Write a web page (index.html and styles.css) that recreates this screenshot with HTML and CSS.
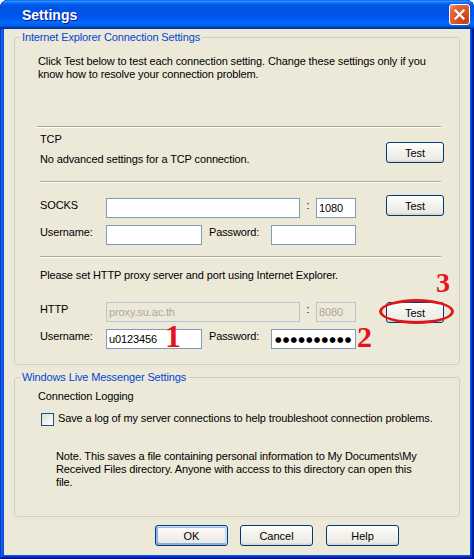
FILE: index.html
```html
<!DOCTYPE html>
<html>
<head>
<meta charset="utf-8">
<title>Settings</title>
<link rel="stylesheet" href="styles.css">
</head>
<body>
<div class="window">
  <div class="titlebar">
    <span class="title">Settings</span>
    <span class="close" aria-label="Close">
      <svg width="21" height="21" viewBox="0 0 21 21"><path d="M6.5 6.5L14.5 14.5M14.5 6.5L6.5 14.5" stroke="#fff" stroke-width="2.2" stroke-linecap="square"/></svg>
    </span>
  </div>
  <div class="client">
    <fieldset class="group g1">
      <legend>Internet Explorer Connection Settings</legend>
      <p class="intro">Click Test below to test each connection setting. Change these settings only if you<br>know how to resolve your connection problem.</p>
      <div class="sep sep1"></div>
      <div class="tcp">
        <div class="tcp-text">
          <div>TCP</div>
          <div class="tcp-desc">No advanced settings for a TCP connection.</div>
        </div>
        <button class="btn test tcp-test">Test</button>
      </div>
      <div class="sep sep2"></div>
      <div class="proxy socks">
        <div class="row">
          <span class="name">SOCKS</span>
          <input class="field server" value="">
          <span class="colon">:</span>
          <input class="field port" value="1080">
          <button class="btn test socks-test">Test</button>
        </div>
        <div class="row row2">
          <span class="name">Username:</span>
          <input class="field user" value="">
          <span class="pw">Password:</span>
          <input class="field pass" value="">
        </div>
      </div>
      <div class="sep sep3"></div>
      <p class="http-note">Please set HTTP proxy server and port using Internet Explorer.</p>
      <div class="proxy http">
        <div class="row">
          <span class="name">HTTP</span>
          <input class="field server" value="proxy.su.ac.th" disabled>
          <span class="colon">:</span>
          <input class="field port" value="8080" disabled>
          <button class="btn test http-test">Test</button>
          <span class="mark mark3">3</span>
          <span class="ring"></span>
        </div>
        <div class="row row2">
          <span class="name">Username:</span>
          <input class="field user" value="u0123456">
          <span class="mark mark1">1</span>
          <span class="pw">Password:</span>
          <span class="field pass dots">●●●●●●●●●●</span>
          <span class="mark mark2">2</span>
        </div>
      </div>
    </fieldset>

    <fieldset class="group g2">
      <legend>Windows Live Messenger Settings</legend>
      <p class="log-title">Connection Logging</p>
      <label class="check-row">
        <span class="checkbox"></span>
        <span>Save a log of my server connections to help troubleshoot connection problems.</span>
      </label>
      <p class="log-note">Note. This saves a file containing personal information to My Documents\My<br>Received Files directory. Anyone with access to this directory can open this<br>file.</p>
    </fieldset>

    <div class="actions">
      <button class="btn action default">OK</button>
      <button class="btn action">Cancel</button>
      <button class="btn action">Help</button>
    </div>
  </div>
</div>
</body>
</html>
```
FILE: styles.css
```css
* { box-sizing: border-box; }

html, body {
  margin: 0;
  padding: 0;
  background: #ffffff;
}

body {
  width: 474px;
  height: 559px;
  overflow: hidden;
  font-family: "Liberation Sans", Arial, sans-serif;
  font-size: 11px;
  line-height: 13px;
  letter-spacing: -0.13px;
  color: #000;
}

.window {
  width: 474px;
  height: 559px;
  display: flex;
  flex-direction: column;
  background: #0855dd;
  border-radius: 8px 8px 0 0;
  overflow: hidden;
  box-shadow: inset -1px -1px #00138c, inset 1px 1px #0831d9, inset -2px -2px #001ea0, inset 2px 2px #166aee, inset -3px -3px #003bda, inset 3px 3px #0855dd;
}

.titlebar {
  flex: none;
  height: 29px;
  display: flex;
  align-items: center;
  justify-content: space-between;
  padding: 0 4px 0 22px;
  background: linear-gradient(to bottom, #0058ee 0%, #3593ff 4%, #288eff 6%, #127dff 8%, #036ffc 10%, #0262ee 14%, #0057e5 20%, #0054e3 24%, #0055eb 56%, #005bf5 66%, #026afe 76%, #0062ef 86%, #0052d6 92%, #0040ab 94%, #003092 100%);
  border-radius: 8px 8px 0 0;
}

.title {
  color: #fff;
  font-weight: bold;
  font-size: 14px;
  line-height: 16px;
  text-shadow: 1px 1px #0f1089;
  letter-spacing: 0;
}

.close {
  width: 21px;
  height: 21px;
  display: block;
  border: 1px solid #fff;
  border-radius: 3px;
  background: radial-gradient(circle at 85% 85%, #c13d14 0%, #d8522a 45%, #e1693f 75%, #f0a587 100%);
}

.close svg { display: block; margin: -1px; }

.client {
  flex: 1;
  margin: 0 4px 4px;
  background: #ece9d8;
  padding: 2px 10px 0;
}

.group {
  margin: 0;
  padding: 0;
  border: 1px solid #d0d0bf;
  border-radius: 3px;
  min-width: 0;
}

.group legend {
  margin-left: 5px;
  padding: 0 2px;
  color: #0046d5;
  line-height: 13px;
}

.g1 { padding-bottom: 15px; }
.g2 { margin-top: 6px; padding-bottom: 27px; }

p { margin: 0; }

.intro {
  margin: 11px 0 0 23px;
  white-space: nowrap;
}

.sep {
  height: 2px;
  border-top: 1px solid #aca899;
  border-bottom: 1px solid #ffffff;
  margin-left: 25px;
  width: 401px;
}

.sep1 { margin-top: 45px; margin-left: 22px; width: 404px; }
.sep2 { margin-top: 15px; }
.sep3 { margin-top: 11px; }

.btn {
  font-family: inherit;
  font-size: 11px;
  letter-spacing: 0;
  color: #000;
  height: 21px;
  padding: 0;
  margin: 0;
  border: 1px solid #003c74;
  border-radius: 3px;
  background: linear-gradient(180deg, #ffffff 0%, #f4f3ee 40%, #ecebe6 86%, #d6d0c5 100%);
}

.tcp {
  margin-top: 5px;
  padding-left: 25px;
  display: flex;
  align-items: flex-start;
}

.tcp-text { width: 346px; }
.tcp-desc { margin-top: 7px; }

.test { width: 58px; }
.tcp-test { margin-top: 9px; }
.socks-test { margin-left: 30px; margin-top: -3px; }
.http-test { margin-left: 30px; }

.socks { margin-top: 15px; }
.http { margin-top: 20px; }

.row {
  position: relative;
  display: flex;
  align-items: flex-start;
  padding-left: 25px;
  height: 20px;
}

.row2 { margin-top: 7px; }

.name { width: 66px; margin-top: 1px; }

.field {
  height: 20px;
  border: 1px solid #7f9db9;
  background: #fff;
  padding: 0 2px;
  margin: 0;
  font-family: inherit;
  font-size: 11px;
  letter-spacing: -0.13px;
  color: #000;
  outline: none;
  border-radius: 0;
}

.field:disabled {
  background: #ece9d8;
  border-color: #b9c4d1;
  color: #aca899;
}

.server { width: 194px; }
.port { width: 40px; }
.user { width: 96px; }
.pass { width: 85px; }

.colon {
  width: 16px;
  text-align: center;
  margin-top: 1px;
}

.pw { width: 62px; margin-left: 7px; margin-top: 1px; }

.dots {
  display: flex;
  align-items: center;
  font-family: "DejaVu Sans", sans-serif;
  font-size: 7.5px;
  letter-spacing: 1.2px;
  padding-left: 3px;
}

.http-note { margin: 11px 0 0 25px; }

.mark {
  position: absolute;
  font-family: "Liberation Serif", "Times New Roman", serif;
  font-weight: bold;
  letter-spacing: 0;
  color: #e2141c;
}

.mark1 { left: 150px; top: -9px; font-size: 32px; line-height: 32px; }
.mark2 { left: 342px; top: -7px; font-size: 30px; line-height: 30px; }
.mark3 { left: 421px; top: -33px; font-size: 28px; line-height: 28px; }

.ring {
  position: absolute;
  left: 364px;
  top: -3px;
  width: 75px;
  height: 25px;
  border: 3px solid #e2141c;
  border-radius: 50%;
}

.log-title { margin: 6px 0 0 23px; }

.check-row {
  display: flex;
  align-items: flex-start;
  margin-top: 9px;
  padding-left: 26px;
}

.checkbox {
  width: 13px;
  height: 13px;
  margin-top: 1px;
  margin-right: 4px;
  border: 1px solid #1c5180;
  background: linear-gradient(135deg, #dcdcd7 0%, #f3f3ef 60%, #ffffff 100%);
}

.log-note { margin: 24px 0 0 41px; white-space: nowrap; }

.actions {
  display: flex;
  gap: 12px;
  margin: 8px 0 0 141px;
}

.action { width: 73px; }
.action:last-child { margin-left: 1px; }

.default {
  box-shadow: inset -1px 1px #cee7ff, inset 1px 2px #98b8ea, inset -2px 2px #bcd4f6, inset 1px -1px #89ade4, inset 2px -2px #89ade4;
}
```
